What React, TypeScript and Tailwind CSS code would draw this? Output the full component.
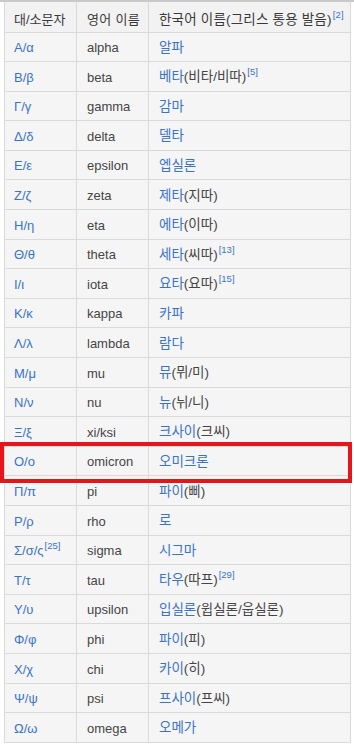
type Row = {
  letter: string;
  letterSup?: string;
  name: string;
  ko: string;
  note?: string;
  sup?: string;
};

const rows: Row[] = [
  { letter: 'Α/α', name: 'alpha', ko: '알파' },
  { letter: 'Β/β', name: 'beta', ko: '베타', note: '(비타/비따)', sup: '5' },
  { letter: 'Γ/γ', name: 'gamma', ko: '감마' },
  { letter: 'Δ/δ', name: 'delta', ko: '델타' },
  { letter: 'Ε/ε', name: 'epsilon', ko: '엡실론' },
  { letter: 'Ζ/ζ', name: 'zeta', ko: '제타', note: '(지따)' },
  { letter: 'Η/η', name: 'eta', ko: '에타', note: '(이따)' },
  { letter: 'Θ/θ', name: 'theta', ko: '세타', note: '(씨따)', sup: '13' },
  { letter: 'Ι/ι', name: 'iota', ko: '요타', note: '(요따)', sup: '15' },
  { letter: 'Κ/κ', name: 'kappa', ko: '카파' },
  { letter: 'Λ/λ', name: 'lambda', ko: '람다' },
  { letter: 'Μ/μ', name: 'mu', ko: '뮤', note: '(뮈/미)' },
  { letter: 'Ν/ν', name: 'nu', ko: '뉴', note: '(뉘/니)' },
  { letter: 'Ξ/ξ', name: 'xi/ksi', ko: '크사이', note: '(크씨)' },
  { letter: 'Ο/ο', name: 'omicron', ko: '오미크론' },
  { letter: 'Π/π', name: 'pi', ko: '파이', note: '(삐)' },
  { letter: 'Ρ/ρ', name: 'rho', ko: '로' },
  { letter: 'Σ/σ/ς', letterSup: '25', name: 'sigma', ko: '시그마' },
  { letter: 'Τ/τ', name: 'tau', ko: '타우', note: '(따프)', sup: '29' },
  { letter: 'Υ/υ', name: 'upsilon', ko: '입실론', note: '(윕실론/웁실론)' },
  { letter: 'Φ/φ', name: 'phi', ko: '파이', note: '(피)' },
  { letter: 'Χ/χ', name: 'chi', ko: '카이', note: '(히)' },
  { letter: 'Ψ/ψ', name: 'psi', ko: '프사이', note: '(프씨)' },
  { letter: 'Ω/ω', name: 'omega', ko: '오메가' },
];

function Sup({ n }: { n: string }) {
  return (
    <span className="ml-[1px] inline-block align-[6px] text-[9.5px] leading-none text-[#3a73c9]">[{n}]</span>
  );
}

export default function App() {
  return (
    <div className="relative w-[354px] h-[746px] bg-white font-['Liberation_Sans','Noto_Sans_CJK_KR',sans-serif] text-[13px]">
      <div className="h-[2px] bg-[#c9c9c9]" />

      <table className="ml-[4px] w-[347px] table-fixed border-collapse">
        <colgroup>
          <col className="w-[72px]" />
          <col className="w-[72px]" />
          <col />
        </colgroup>
        <thead>
          <tr className="h-[30px] bg-[#f2f2f2] text-[#3a3a3a]">
            <th className="border border-t-0 border-[#d9d9d9] pl-[9px] pt-[6px] text-left font-normal">대/소문자</th>
            <th className="border border-t-0 border-[#d9d9d9] pl-[10px] pt-[6px] text-left font-normal tracking-[0.3px]">영어 이름</th>
            <th className="border border-t-0 border-[#d9d9d9] pl-[10px] pt-[6px] text-left font-normal whitespace-nowrap text-[13.5px] tracking-[0.2px]">
              한국어 이름(그리스 통용 발음)
              <Sup n="2" />
            </th>
          </tr>
        </thead>
        <tbody>
          {rows.map((r) => (
            <tr key={r.name} className="h-[29.6px] bg-[#f5f5f5]">
              <td className="border border-[#dadada] pl-[9px] pt-[2px] text-[#3a73c9]">
                {r.letter}
                {r.letterSup && <Sup n={r.letterSup} />}
              </td>
              <td className="border border-[#dadada] pl-[10px] pt-[2px] text-[#454545]">{r.name}</td>
              <td className="border border-[#dadada] pl-[10px] pt-[2px] whitespace-nowrap text-[13.5px]">
                <span className="text-[#3a73c9]">{r.ko}</span>
                {r.note && <span className="text-[#454545]">{r.note}</span>}
                {r.sup && <Sup n={r.sup} />}
              </td>
            </tr>
          ))}
        </tbody>
      </table>

      {/* highlight around the omicron row */}
      <div className="absolute left-0 top-[442px] w-[352px] h-[41px] border-4 border-[#e8141c]" />
    </div>
  );
}
